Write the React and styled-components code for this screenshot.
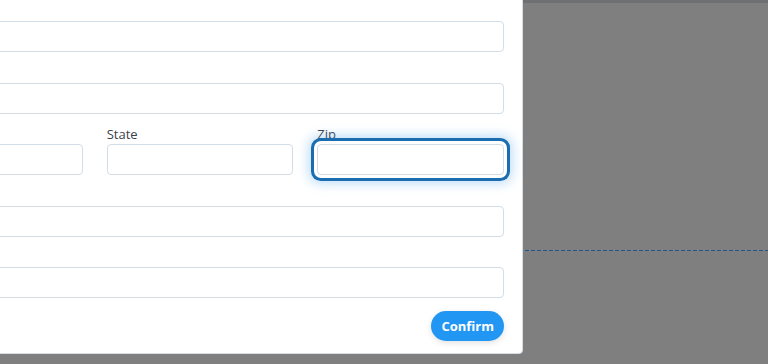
import styled, { createGlobalStyle } from "styled-components";

const GlobalStyle = createGlobalStyle`
  html, body {
    margin: 0;
    padding: 0;
    background: #7f7f7f;
    overflow: hidden;
  }
  * {
    box-sizing: border-box;
  }
`;

const fields = [
  { id: "name", label: "Full name" },
  { id: "address", label: "Address" },
];

const lowerFields = [
  { id: "phone", label: "Phone" },
  { id: "email", label: "Email" },
];

export default function App() {
  return (
    <>
      <GlobalStyle />
      <Page>
        <TopRule />
        <DashedRule />

        <Modal>
          <Form onSubmit={(e) => e.preventDefault()}>
            {fields.map((f) => (
              <Field key={f.id}>
                <Label htmlFor={f.id}>{f.label}</Label>
                <Input id={f.id} />
              </Field>
            ))}

            <Row>
              <Field>
                <Label htmlFor="city">City</Label>
                <Input id="city" />
              </Field>
              <Field>
                <Label htmlFor="state">State</Label>
                <Input id="state" />
              </Field>
              <Field>
                <Label htmlFor="zip">Zip</Label>
                <Input id="zip" $focused />
              </Field>
            </Row>

            {lowerFields.map((f) => (
              <Field key={f.id}>
                <Label htmlFor={f.id}>{f.label}</Label>
                <Input id={f.id} />
              </Field>
            ))}

            <Actions>
              <ConfirmButton type="submit">Confirm</ConfirmButton>
            </Actions>
          </Form>
        </Modal>
      </Page>
    </>
  );
}

const Page = styled.div`
  position: relative;
  width: 768px;
  height: 364px;
  overflow: hidden;
  background: #7f7f7f;
`;

const TopRule = styled.div`
  height: 3px;
  background: #6e7073;
`;

const DashedRule = styled.div`
  height: 1px;
  margin: 247px 0 0 525px;
  background: repeating-linear-gradient(
    90deg,
    #22558c 0 4px,
    transparent 4px 6px
  );
`;

const Modal = styled.div`
  position: absolute;
  left: -123px;
  top: -18px;
  width: 646px;
  padding: 18px 18px 12px 18px;
  background: #fff;
  border: 1px solid #d6dde3;
  border-radius: 4px;
  font-family: "Open Sans", "Liberation Sans", sans-serif;
`;

const Form = styled.form`
  display: flex;
  flex-direction: column;
  gap: 10.5px;
`;

const Row = styled.div`
  display: grid;
  grid-template-columns: repeat(3, 1fr);
  gap: 24px;
`;

const Field = styled.div`
  display: flex;
  flex-direction: column;
`;

const Label = styled.label`
  display: block;
  height: 20px;
  font-size: 13px;
  line-height: 20px;
  color: #3d4248;
  white-space: nowrap;
`;

const Input = styled.input`
  display: block;
  width: 100%;
  height: 31px;
  margin: 0;
  padding: 0 8px;
  border: 1px solid #d3dde6;
  border-radius: 4px;
  background: #fff;
  font: inherit;
  outline: none;
  box-shadow: ${(p) =>
    p.$focused
      ? "0 0 0 3px #fff, 0 0 0 6px #1b6db0, 0 0 12px 8px rgba(80, 165, 235, 0.4)"
      : "none"};
`;

const Actions = styled.div`
  display: flex;
  justify-content: flex-end;
  margin-top: 2.5px;
`;

const ConfirmButton = styled.button`
  height: 30px;
  padding: 0 10px;
  border: none;
  border-radius: 15px;
  background: #2196f3;
  color: #fff;
  font-family: "Open Sans", "Liberation Sans", sans-serif;
  font-size: 13px;
  font-weight: 700;
  box-shadow: 0 2px 6px rgba(0, 0, 0, 0.12);
  cursor: pointer;
`;
